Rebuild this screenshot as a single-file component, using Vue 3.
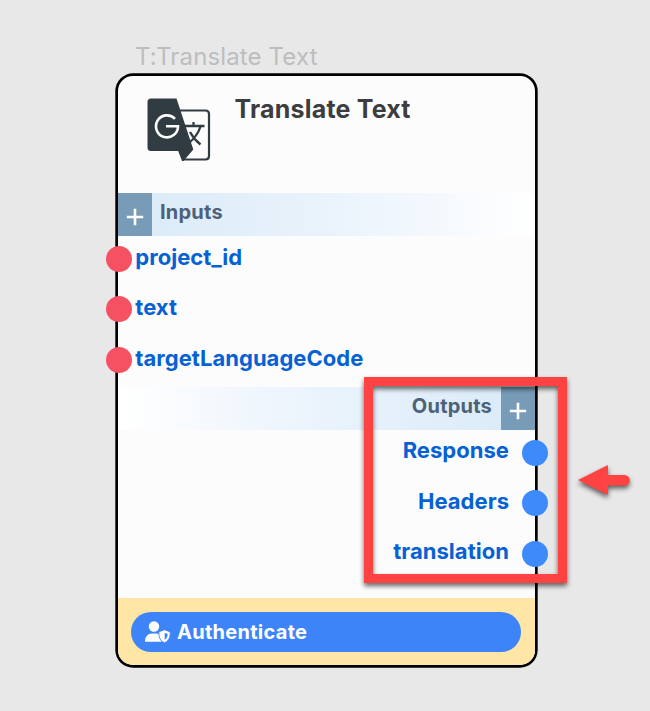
<script setup>
const inputs = ['project_id', 'text', 'targetLanguageCode']
const outputs = ['Response', 'Headers', 'translation']
</script>

<template>
  <main class="canvas">
    <div class="caption">T:Translate Text</div>
    <section class="node">
      <header class="head">
        <svg class="logo" viewBox="0 0 64 64" width="64" height="64">
          <path d="M31 12.5H58.5Q62 12.5 62 16V58Q62 61.5 58.5 61.5H36" fill="none" stroke="#303c42" stroke-width="2.2" />
          <path d="M4 .5H29.500L46.300 51.500L36.500 63H35L31.200 53H4Q.5 53 .5 49.500V4Q.5 .5 4 .5Z" fill="#303c42" />
          <path d="M28 20.800A11 11 0 1 0 31 28.300H19" fill="none" stroke="#fcfcfc" stroke-width="2.600" />
          <g fill="none" stroke="#303c42" stroke-width="2.300">
            <path d="M38 28H57.500M46.500 24V28M53.500 28.500Q50.500 38 41.800 45M43 34Q47 41.500 53.500 46.500" />
          </g>
        </svg>
        <h1>Translate Text</h1>
      </header>

      <div class="bar bar-in">
        <button class="add" aria-label="Add input"><svg width="18" height="18" viewBox="0 0 18 18"><path d="M9 .8V17.200M.8 9H17.200" /></svg></button>
        <span>Inputs</span>
      </div>
      <ul class="ports ports-in">
        <li v-for="name in inputs" :key="name"><i class="dot"></i><span>{{ name }}</span></li>
      </ul>

      <div class="bar bar-out">
        <span>Outputs</span>
        <button class="add" aria-label="Add output"><svg width="18" height="18" viewBox="0 0 18 18"><path d="M9 .8V17.200M.8 9H17.200" /></svg></button>
      </div>
      <ul class="ports ports-out">
        <li v-for="name in outputs" :key="name"><span>{{ name }}</span><i class="dot"></i></li>
      </ul>

      <footer class="foot">
        <button class="auth">
          <svg width="26" height="22" viewBox="0 0 26 22">
            <circle cx="9" cy="5.500" r="5.200" fill="#fff" />
            <path d="M0 20.500C0 15.500 3 12.400 7 12.400H11Q12.600 12.400 13.800 13C13.800 16.500 15 19 17 20.700H.5Q0 20.700 0 20.500Z" fill="#fff" />
            <path d="M19.500 8.700L25.200 10.900Q25.500 16.800 23 19.300Q21.500 21 19.500 21.700Q17.500 21 16 19.300Q13.500 16.800 13.800 10.900Z" fill="#fff" stroke="#3d84f8" stroke-width=".8" />
            <path d="M19.700 11.800L22.700 13Q22.500 17.200 19.700 18.800Z" fill="#3d84f8" />
          </svg>
          <span>Authenticate</span>
        </button>
      </footer>
    </section>

    <div class="frame"></div>
    <svg class="arrow" width="64" height="44" viewBox="0 0 64 44">
      <path d="M6 15L36 0V10H52.500A5.300 5.300 0 0 1 52.500 20.600H36V30Z" fill="#ff4343" />
    </svg>
  </main>
</template>

<style>
body { margin: 0; background: #e8e8e8; }
</style>

<style scoped>
.canvas {
  position: relative;
  box-sizing: border-box;
  width: 650px;
  height: 711px;
  padding: 41px 0 0 115px;
  overflow: hidden;
  background: #e8e8e8;
  font-family: Inter, "Liberation Sans", sans-serif;
}
.caption {
  height: 32px;
  padding-left: 20px;
  font-size: 24px;
  line-height: 32px;
  letter-spacing: .14px;
  font-feature-settings: "calt" 0;
  color: #bdbdbd;
}
.node {
  display: flex;
  flex-direction: column;
  box-sizing: border-box;
  width: 421px;
  height: 593px;
  margin: 1px 0 0 1px;
  border: 2px solid #000;
  border-radius: 17px;
  box-shadow: 0 0 0 .7px #000;
  background: #fcfcfc;
}
.node > * { flex-shrink: 0; }
.head {
  display: flex;
  box-sizing: border-box;
  height: 117px;
  padding: 22px 0 0 28.5px;
}
.logo { flex: none; }
h1 {
  margin: -5px 0 0 24px;
  font-size: 25px;
  line-height: 32px;
  letter-spacing: .2px;
  font-weight: 700;
  color: #3d3d3f;
}
.bar {
  display: flex;
  height: 43px;
  font-size: 20px;
  line-height: 38px;
  letter-spacing: .22px;
  font-weight: 700;
  color: #4d6278;
}
.bar-in {
  gap: 8px;
  background: linear-gradient(90deg, #d8eaf7, #eef5fd 62%, #fff);
}
.bar-out {
  justify-content: flex-end;
  gap: 9px;
  height: 42.5px;
  margin-bottom: .5px;
  background: linear-gradient(270deg, #d8eaf7, #eef5fd 62%, #fff);
}
.add {
  display: flex;
  align-items: center;
  justify-content: center;
  width: 34px;
  padding: 5px 1px 0 0;
  border: 0;
  background: #789bb8;
}
.add path { stroke: #fff; stroke-width: 2.6; }
.ports {
  display: flex;
  flex-direction: column;
  box-sizing: border-box;
  margin: 0;
  padding: 0;
  list-style: none;
  font-size: 22px;
  font-weight: 700;
  line-height: 26px;
  letter-spacing: .03px;
  color: #0661d5;
}
.ports li {
  display: flex;
  align-items: center;
  height: 50.5px;
}
.ports span { position: relative; top: -2px; }
.dot {
  flex: none;
  width: 26px;
  height: 26px;
  border-radius: 50%;
}
.ports-in { height: 151px; margin-left: -12.4px; }
.ports-in li { gap: 3.7px; position: relative; top: -2px; }
.ports-in .dot { background: #f55163; }
.ports-out { height: 168px; margin-right: -13.4px; }
.ports-out li { justify-content: flex-end; gap: 13.4px; position: relative; top: -2.4px; }
.ports-out span { top: -2.5px; }
.ports-out .dot { background: #3d8bfb; }
.foot {
  flex: 1;
  box-sizing: border-box;
  padding: 13.5px 13px 0;
  border-radius: 0 0 15px 15px;
  background: #ffe6a7;
}
.auth {
  display: flex;
  align-items: center;
  gap: 6px;
  width: 390.4px;
  height: 40.5px;
  padding: 1px 14px 0;
  border: 0;
  border-radius: 21px;
  background: #3d84f8;
  color: #fff;
  font: 700 20px/40px Inter, "Liberation Sans", sans-serif;
  letter-spacing: .28px;
}
.frame {
  position: absolute;
  left: 364px;
  top: 377px;
  box-sizing: border-box;
  width: 203px;
  height: 206px;
  border: 9px solid #ff4343;
  filter: drop-shadow(0 3px 2.5px rgba(0, 0, 0, .6));
}
.arrow {
  position: absolute;
  left: 572px;
  top: 465px;
  overflow: visible;
  filter: drop-shadow(0 3px 2.5px rgba(0, 0, 0, .6));
}
</style>
